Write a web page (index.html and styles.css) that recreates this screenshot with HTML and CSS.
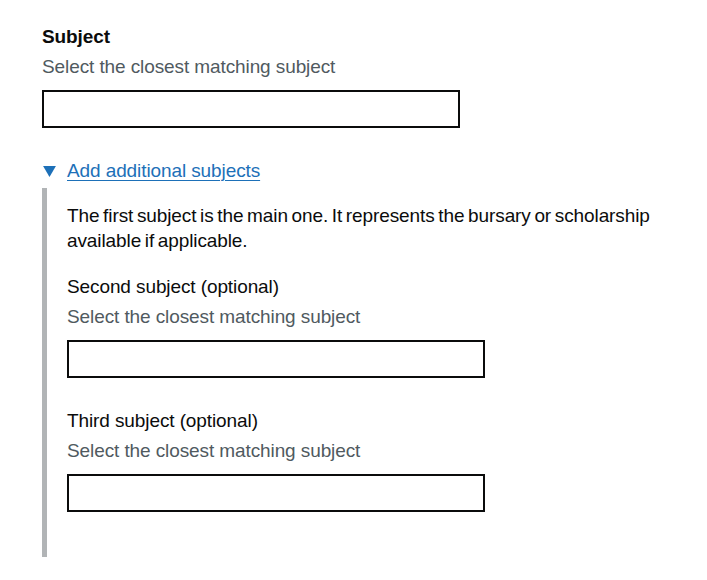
FILE: index.html
```html
<!DOCTYPE html>
<html lang="en">
<head>
<meta charset="utf-8">
<title>Subject</title>
<link rel="stylesheet" href="styles.css">
</head>
<body>
<main class="page">
  <div class="form-group">
    <label class="label label-bold" for="subject">Subject</label>
    <div class="hint">Select the closest matching subject</div>
    <input class="input" id="subject" type="text">
  </div>
  <details class="details" open>
    <summary class="summary">
      <svg class="arrow" width="13" height="11" viewBox="0 0 14 12" aria-hidden="true"><polygon points="0,0 14,0 7,12" fill="currentColor"/></svg>
      <span class="summary-text">Add additional subjects</span>
    </summary>
    <div class="details-text">
      <p class="body">The first subject is the main one. It represents the bursary or scholarship available if applicable.</p>
      <div class="form-group">
        <label class="label" for="subject2">Second subject (optional)</label>
        <div class="hint">Select the closest matching subject</div>
        <input class="input" id="subject2" type="text">
      </div>
      <div class="form-group">
        <label class="label" for="subject3">Third subject (optional)</label>
        <div class="hint">Select the closest matching subject</div>
        <input class="input" id="subject3" type="text">
      </div>
    </div>
  </details>
</main>
</body>
</html>
```

FILE: styles.css
```css
html, body {
  margin: 0;
  padding: 0;
  background: #ffffff;
}

.page {
  padding: 24px 20px 0 42px;
  font-family: "Liberation Sans", Arial, sans-serif;
  font-size: 19px;
  line-height: 25px;
  letter-spacing: -0.1px;
  color: #0b0c0c;
}

.form-group {
  margin-bottom: 30px;
}

.label {
  display: block;
  font-size: 19px;
  line-height: 25px;
  margin-bottom: 5px;
}

.label-bold {
  font-weight: 700;
}

.hint {
  color: #505a5f;
  font-size: 19px;
  line-height: 25px;
  margin-bottom: 11px;
}

.input {
  display: block;
  box-sizing: border-box;
  width: 418px;
  height: 38px;
  margin: 0;
  padding: 5px;
  border: 2px solid #0b0c0c;
  border-radius: 0;
  background: #ffffff;
  font-family: inherit;
  font-size: 19px;
  appearance: none;
}

.details {
  margin: 0;
}

.summary {
  display: flex;
  align-items: center;
  list-style: none;
  color: #1d70b8;
  cursor: pointer;
  margin-bottom: 5px;
  line-height: 25px;
}

.summary::-webkit-details-marker {
  display: none;
}

.arrow {
  flex: none;
  margin: 2px 11px 0 1px;
  color: #1d70b8;
}

.summary-text {
  text-decoration: underline;
  text-decoration-thickness: 1px;
  text-underline-offset: 3px;
}

.details-text {
  border-left: 5px solid #b1b4b6;
  padding: 15px 0 15px 20px;
}

.body {
  margin: 0 0 21px;
  word-spacing: -1.5px;
}
```
